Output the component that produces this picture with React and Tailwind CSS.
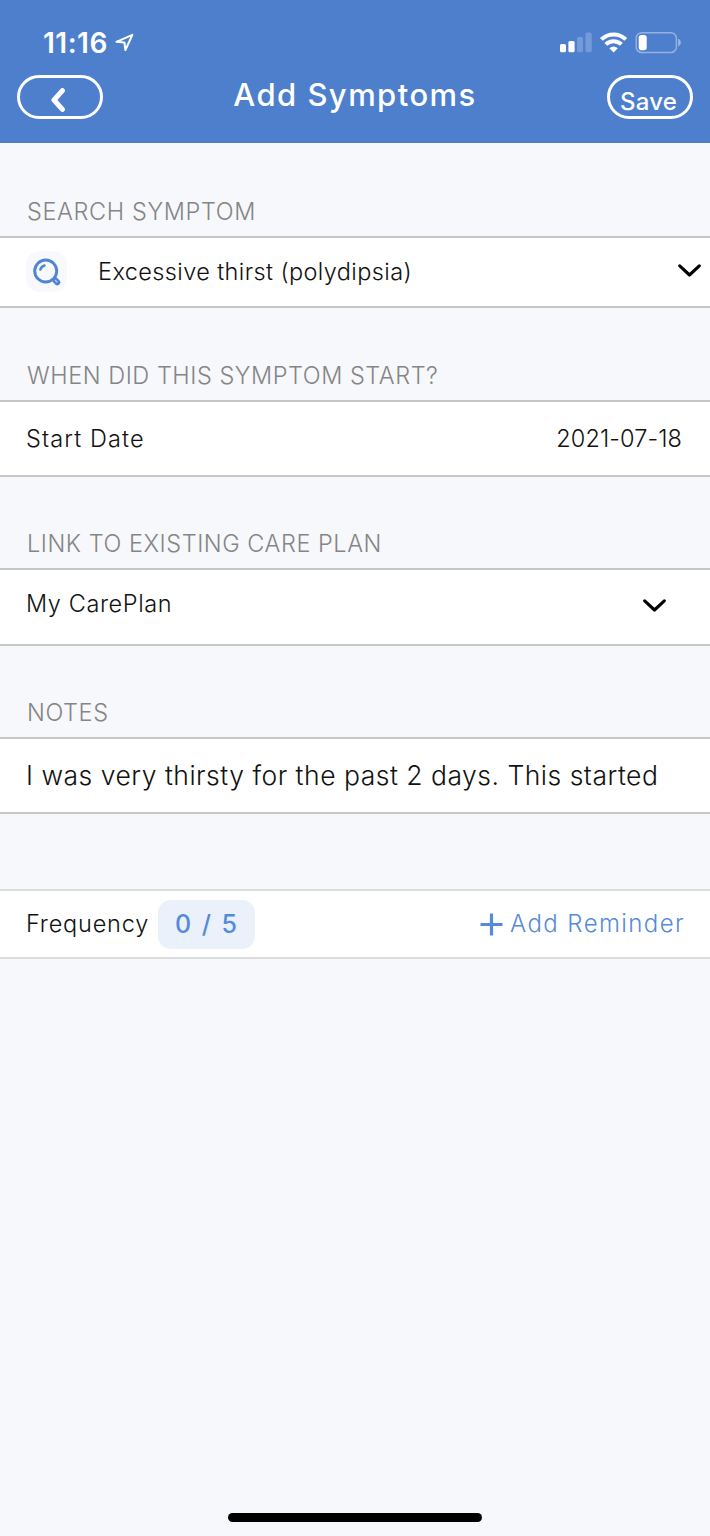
import { useState } from 'react';

function StatusIcons() {
  return (
    <svg width="122" height="24" viewBox="559 31 122 24" fill="#fff">
      {/* signal */}
      <rect x="560" y="44" width="6" height="8.3" rx="1.5" />
      <rect x="568.4" y="41" width="6.2" height="11.3" rx="1.5" />
      <rect x="577" y="37" width="6" height="15.3" rx="1.5" opacity="0.22" />
      <rect x="585.5" y="32.6" width="6.2" height="19.7" rx="1.5" opacity="0.22" />
      {/* wifi */}
      <g fill="none" stroke="#fff" strokeWidth="4">
        <path d="M601.4 39.4a17.4 17.4 0 0 1 24.4 0" />
        <path d="M605.8 44.4a11.2 11.2 0 0 1 15.6 0" />
      </g>
      <path d="M613.6 52.4l-4.2-4.2a6 6 0 0 1 8.4 0z" />
      {/* battery */}
      <rect x="636.2" y="32.7" width="40.2" height="19.8" rx="5.6" fill="none" stroke="#fff" strokeWidth="1.5" opacity="0.4" />
      <rect x="638.7" y="35" width="8" height="15.2" rx="2.6" />
      <path d="M678.2 38.8c1.6.6 2.6 2 2.6 3.8s-1 3.2-2.6 3.8z" opacity="0.45" />
    </svg>
  );
}

function LocationArrow() {
  return (
    <svg width="20" height="19" viewBox="0 0 20 19" fill="none" stroke="#fff" strokeWidth="2" strokeLinejoin="round">
      <path d="M17.4 1.8 1.4 8.8 9.4 9.5 10.4 17z" />
    </svg>
  );
}

function SearchIcon() {
  return (
    <svg width="28" height="28" viewBox="0 0 28 28" fill="none" stroke="#5084d4" strokeLinecap="round">
      <circle cx="12.7" cy="13" r="11" strokeWidth="2.9" />
      <path d="M7.3 11.6a6 6 0 0 1 4.2-4.1" strokeWidth="2.4" />
      <path d="M22.2 22.2l2.1 2.1" strokeWidth="6" />
      <path d="M22.4 22.4l1.5 1.5" stroke="#c9dbf5" strokeWidth="1.2" />
    </svg>
  );
}

function ChevronDown() {
  return (
    <svg width="23" height="13" viewBox="0 0 23 13" fill="none" stroke="#000" strokeWidth="3.1" strokeLinecap="round" strokeLinejoin="round">
      <path d="M1.7 1.8 11.5 11 21.3 1.8" />
    </svg>
  );
}

function SectionLabel({ className, children }) {
  return (
    <h2 className={`flex items-end whitespace-nowrap pb-[12px] pl-[27px] text-[23.5px] font-light leading-[24px] text-[#858585] ${className}`}>
      {children}
    </h2>
  );
}

function Row({ className, children }) {
  return (
    <div className={`flex items-center justify-between whitespace-nowrap border-y-2 border-[#c6c6c6] bg-white text-[23.5px] font-light leading-[24px] ${className}`}>
      {children}
    </div>
  );
}

export default function App() {
  const [count] = useState(0);

  return (
    <div className="flex h-[1536px] w-[710px] flex-col overflow-hidden bg-[#f6f8fc] font-['Inter',sans-serif] text-[#111]">
      {/* Header */}
      <header className="h-[143px] bg-[#4d7fcd] pt-[29px] text-white">
        <div className="flex h-[27px] items-center pl-[43px] pr-[29px]">
          <span className="text-[28px] font-semibold leading-none tracking-[0.5px]">11:16</span>
          <span className="ml-[7px]"><LocationArrow /></span>
          <span className="ml-auto"><StatusIcons /></span>
        </div>
        <div className="mt-[19px] flex h-[44px] items-center justify-between px-[17px]">
          <button className="flex h-[44px] w-[86px] items-center justify-center rounded-full border-3 border-white">
            <svg className="mt-[5px] mr-[5px]" width="14" height="24" viewBox="0 0 14 24" fill="none" stroke="#fff" strokeWidth="5" strokeLinecap="round" strokeLinejoin="round">
              <path d="M11.4 2.6 3 12 11.4 21.4" />
            </svg>
          </button>
          <h1 className="whitespace-nowrap pb-[5px] text-[31px] font-medium leading-none tracking-[1.45px]">Add Symptoms</h1>
          <button className="flex h-[44px] w-[86px] justify-center rounded-full border-3 border-white pt-[12px] pr-[3px]">
            <span className="text-[24px] font-medium leading-[24px] tracking-[0.2px]">Save</span>
          </button>
        </div>
      </header>

      <SectionLabel className="h-[93px] tracking-[0.62px]">SEARCH SYMPTOM</SectionLabel>
      <Row className="h-[72px] pl-[26px] pr-[9px]">
        <span className="mb-px flex size-[41px] items-center justify-center rounded-[14px] bg-[#f7f9fc]"><SearchIcon /></span>
        <span className="ml-[31px] mr-auto pb-px tracking-[0.39px]">Excessive thirst (polydipsia)</span>
        <span className="pb-[3px]"><ChevronDown /></span>
      </Row>

      <SectionLabel className="h-[92px] tracking-[0.53px]">WHEN DID THIS SYMPTOM START?</SectionLabel>
      <Row className="h-[77px] pl-[26px] pr-[28px]">
        <span className="tracking-[1.1px]">Start Date</span>
        <span className="tracking-[0.1px]">2021-07-18</span>
      </Row>

      <SectionLabel className="h-[91px] tracking-[0.53px]">LINK TO EXISTING CARE PLAN</SectionLabel>
      <Row className="h-[78px] pl-[26px] pr-[44px]">
        <span className="pb-[6px] tracking-[0.6px]">My CarePlan</span>
        <span className="pb-[4px]"><ChevronDown /></span>
      </Row>

      <SectionLabel className="h-[91px] tracking-[0.6px]">NOTES</SectionLabel>
      <Row className="h-[77px] px-[26px]">
        <span className="pb-px text-[26.5px] tracking-[0.5px]">I was very thirsty for the past 2 days. This started</span>
      </Row>

      {/* Reminders */}
      <div className="mt-[75px] flex h-[70px] items-center whitespace-nowrap border-y-2 border-[#dcdcdc] bg-white pl-[26px] pr-[25px] text-[23.5px] font-light leading-[24px]">
        <span className="w-[132px] tracking-[0.8px]">Frequency</span>
        <span className="flex h-[49px] w-[97px] items-center justify-center rounded-[13px] bg-[#eaf1fa] pl-px text-[25px] font-medium tracking-[2px] text-[#568adc]">
          {count} / 5
        </span>
        <button className="ml-auto flex items-center text-[#568adc]">
          <svg width="23" height="23" viewBox="0 0 23 23" stroke="#568adc" strokeWidth="3.2">
            <path d="M11.5 0.5v22M0.5 11.5h22" />
          </svg>
          <span className="ml-[7px] text-[24px] tracking-[1.4px]">Add Reminder</span>
        </button>
      </div>

      {/* Home indicator */}
      <div className="mx-auto mt-auto mb-[14px] h-[9px] w-[254px] shrink-0 rounded-full bg-black" />
    </div>
  );
}
